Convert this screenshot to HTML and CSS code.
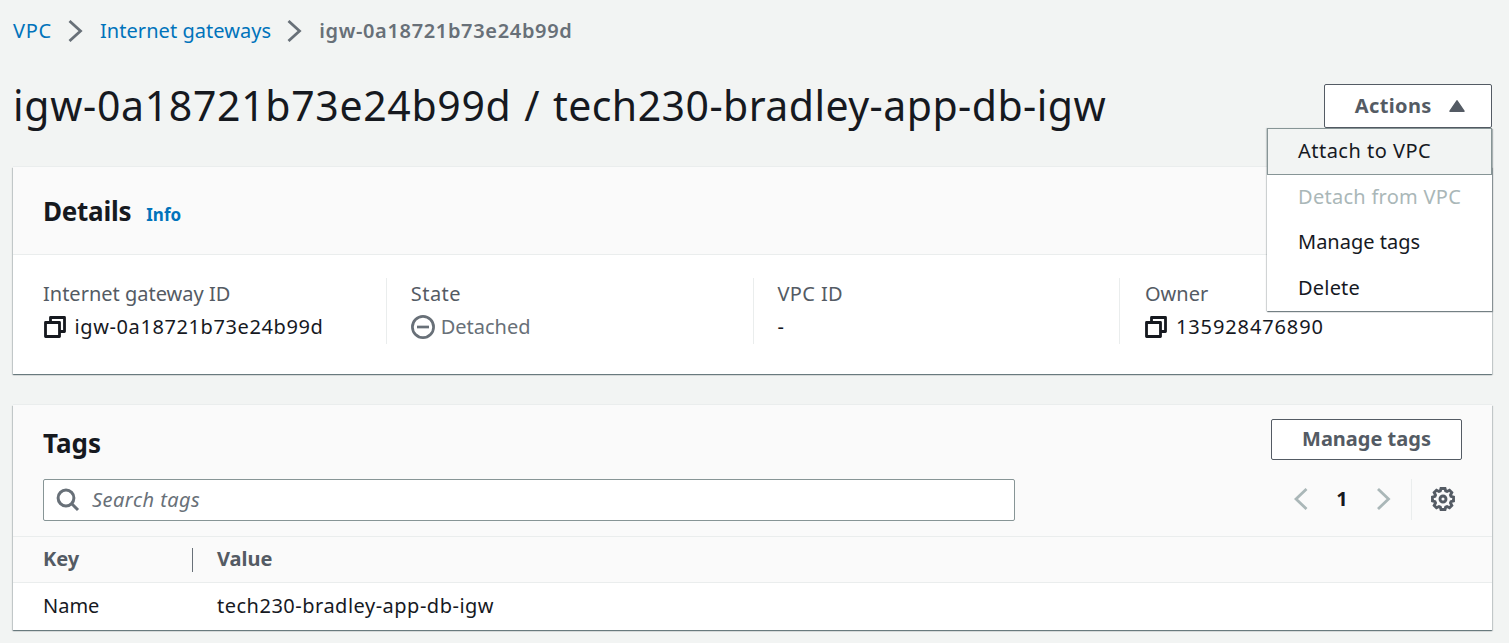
FILE: index.html
```html
<!DOCTYPE html>
<html lang="en">
<head>
<meta charset="utf-8">
<title>Internet gateway details</title>
<link rel="stylesheet" href="styles.css">
</head>
<body>
<nav class="breadcrumbs">
  <a class="crumb crumb-vpc">VPC</a>
  <svg class="crumb-sep" viewBox="0 0 14 22"><path d="M1 1 12 11 1 21"/></svg>
  <a class="crumb crumb-list">Internet gateways</a>
  <svg class="crumb-sep" viewBox="0 0 14 22"><path d="M1 1 12 11 1 21"/></svg>
  <span class="crumb-current">igw-0a18721b73e24b99d</span>
</nav>

<header class="page-header">
  <h1 class="page-title">igw-0a18721b73e24b99d / <span class="title-name">tech230-bradley-app-db-igw</span></h1>
  <div class="dropdown">
    <button class="button actions"><span class="actions-label">Actions</span><svg class="caret" viewBox="0 0 16 12"><path d="M8 .8 15 11.200H1Z"/></svg></button>
    <ul class="menu">
      <li class="menu-item highlighted">Attach to VPC</li>
      <li class="menu-item disabled">Detach from VPC</li>
      <li class="menu-item">Manage tags</li>
      <li class="menu-item item-delete">Delete</li>
    </ul>
  </div>
</header>

<section class="card details">
  <div class="details-header"><h2 class="card-title title-details">Details</h2><a class="info">Info</a></div>
  <div class="columns">
    <div class="column">
      <div class="label">Internet gateway ID</div>
      <div class="value"><svg class="copy" viewBox="0 0 22 22"><path d="M6.5 6.500v-5h14v14h-5M1.500 6.500h14v14h-14z"/></svg><span class="value-id">igw-0a18721b73e24b99d</span></div>
    </div>
    <div class="column">
      <div class="label label-state">State</div>
      <div class="value muted"><svg class="state" viewBox="0 0 24 24"><circle cx="12" cy="12" r="10.6"/><path d="M6 12h12"/></svg><span>Detached</span></div>
    </div>
    <div class="column">
      <div class="label label-vpc">VPC ID</div>
      <div class="value">-</div>
    </div>
    <div class="column">
      <div class="label">Owner</div>
      <div class="value"><svg class="copy" viewBox="0 0 22 22"><path d="M6.5 6.500v-5h14v14h-5M1.500 6.500h14v14h-14z"/></svg><span class="value-owner">135928476890</span></div>
    </div>
  </div>
</section>

<section class="card tags">
  <div class="tags-header">
    <div class="tags-top"><h2 class="card-title title-tags">Tags</h2><button class="button manage">Manage tags</button></div>
    <div class="tools">
      <div class="search"><svg class="search-icon" viewBox="0 0 24 24"><circle cx="10" cy="10" r="7.9"/><path d="M15.5 15.5 22 22"/></svg><span class="placeholder">Search tags</span></div>
      <div class="pager">
        <svg class="page-arrow" viewBox="0 0 14 22"><path d="M12.5 1 2 11 12.5 21"/></svg>
        <span class="page-number">1</span>
        <svg class="page-arrow" viewBox="0 0 14 22"><path d="M1 1 11.500 11 1 21"/></svg>
        <span class="pager-divider"></span>
        <svg class="gear" viewBox="0 0 24 24"><path d="M10 1.500h4l.7 2.500 1.300.5L18.500 3.200 20.800 5.500 19.500 8l.5 1.300 2.500.7v4l-2.500.7-.5 1.300 1.300 2.500-2.300 2.300L16 19.500l-1.300.5-.7 2.500h-4L9.300 20 8 19.500l-2.500 1.300-2.300-2.300L4.500 16 4 14.700 1.500 14v-4L4 9.300 4.500 8 3.200 5.500l2.300-2.300L8 4.500 9.300 4z"/><circle cx="12" cy="12" r="3"/></svg>
      </div>
    </div>
  </div>
  <div class="row head"><div class="cell key">Key</div><div class="cell">Value</div></div>
  <div class="row"><div class="cell key">Name</div><div class="cell tag-value">tech230-bradley-app-db-igw</div></div>
</section>
</body>
</html>
```
FILE: styles.css
```css
* { box-sizing: border-box; }
body { margin: 0; padding: 0 17px 0 13px; height: 643px; overflow: hidden; background: #f2f4f3; color: #16191f; font: 20px/24px "Noto Sans", sans-serif; }
h1, h2, ul { margin: 0; padding: 0; font-weight: 400; list-style: none; }
svg { display: block; flex: none; fill: none; stroke: currentColor; }

.breadcrumbs { display: flex; align-items: center; height: 61px; }
.crumb { color: #0073bb; }
.crumb-vpc { letter-spacing: .75px; }
.crumb-list { letter-spacing: .05px; }
.crumb-sep { width: 15px; height: 22px; margin: 0 17.500px 0 15.500px; color: #687078; stroke-width: 2.8; }
.crumb-current { font-weight: 600; color: #687078; letter-spacing: .66px; }

.page-header { display: flex; justify-content: space-between; height: 106px; }
.page-title { padding-top: 18px; font-size: 41px; line-height: 52px; white-space: nowrap; letter-spacing: .67px; word-spacing: 1.400px; }
.title-name { letter-spacing: .46px; }
.dropdown { position: relative; margin-top: 23px; }
.button { display: flex; align-items: center; justify-content: center; border: 1px solid #545b64; border-radius: 2px; background: #fff; color: #545b64; font: 700 20px/24px "Noto Sans", sans-serif; padding: 0; }
.actions { width: 168px; height: 44px; gap: 17.500px; padding-left: 4px; letter-spacing: .35px; }
.caret { width: 16px; height: 12px; fill: currentColor; stroke-width: 1.500; stroke-linejoin: round; }
.menu { position: absolute; z-index: 2; top: 44px; right: 0; width: 225px; height: 183px; background: #fff; box-shadow: 0 1px 1px #00141c60, 1px 1px 1px #00141c40, -1px 0 1px #00141c20; }
.menu-item { display: flex; align-items: center; height: 45.500px; padding-left: 31px; white-space: nowrap; }
.highlighted { height: 47px; padding: 0 0 2px 30px; border: 1px solid #879596; background: #f2f4f3; letter-spacing: .48px; }
.disabled { color: #aab7b8; height: 44px; letter-spacing: .28px; }
.item-delete { padding-top: 2px; letter-spacing: .2px; }

.card { background: #fff; box-shadow: 0 1px 1px #001c2468, 1px 1px 1px #001c2424, -1px 1px 1px #001c2424, 0 -1px 0 #eaeded; }
.details { height: 207px; }
.details-header { display: flex; align-items: baseline; height: 88px; padding: 27px 30px 0; background: #fafafa; border-bottom: 1px solid #eaeded; }
.card-title { font-size: 26px; line-height: 34px; font-weight: 700; }
.title-details { letter-spacing: -.25px; }
.info { margin-left: 15px; color: #0073bb; font-size: 17px; line-height: 22px; font-weight: 700; }
.columns { display: grid; grid-template-columns: repeat(4, 366.700px); padding: 23px 0 0 6.500px; }
.column { height: 66px; padding: 4px 0 0 23.500px; }
.column + .column { border-left: 1px solid #eaeded; }
.column:last-child { margin-left: -.6px; padding-left: 25px; }
.label { color: #545b64; }
.label-state { letter-spacing: .5px; }
.label-vpc { letter-spacing: .4px; }
.value { display: flex; align-items: center; height: 24px; margin-top: 9px; }
.value-id { letter-spacing: .6px; }
.value-owner { letter-spacing: .88px; }
.muted { color: #687078; }
.copy { width: 22px; height: 22px; margin: -1px 8.500px 0 1px; stroke-width: 2.800; stroke-linejoin: round; }
.column:last-child .copy { margin: -1px 9px 0 0; }
.state { width: 24px; height: 24px; margin-right: 6px; stroke-width: 2.700; }

.tags { height: 225px; margin-top: 31px; }
.tags-header { height: 132px; padding: 14px 30px 0; background: #fafafa; border-bottom: 1px solid #eaeded; }
.tags-top { display: flex; align-items: center; justify-content: space-between; height: 41px; }
.title-tags { padding-top: 7px; }
.manage { width: 191px; height: 41px; padding-bottom: 2px; }
.tools { display: flex; justify-content: space-between; margin-top: 19px; }
.search { display: flex; align-items: center; width: 972px; height: 42px; padding-left: 12px; border: 1px solid #879596; border-radius: 2px; background: #fff; color: #687078; }
.search-icon { width: 24px; height: 24px; margin-right: 12px; stroke-width: 3; }
.placeholder { font-style: italic; letter-spacing: .47px; }
.pager { display: flex; align-items: center; height: 40px; padding-right: 7px; }
.page-arrow { width: 14px; height: 22px; color: #aab7b8; stroke-width: 2.800; }
.page-number { width: 69px; text-align: center; font-weight: 700; }
.pager-divider { width: 1px; height: 41px; margin: 0 19px 0 20.500px; background: #eaeded; }
.gear { width: 24px; height: 24px; color: #545b64; stroke-width: 2.900; }
.row { display: flex; align-items: center; height: 47px; }
.cell { padding: 0 0 2px 24px; }
.key { width: 180px; padding-left: 30px; }
.head { height: 46px; background: #fafafa; border-bottom: 1px solid #eaeded; color: #545b64; font-weight: 700; }
.head .cell { line-height: 22px; }
.head .key { border-right: 1px solid #687078; }
.tag-value { letter-spacing: .5px; }
```
